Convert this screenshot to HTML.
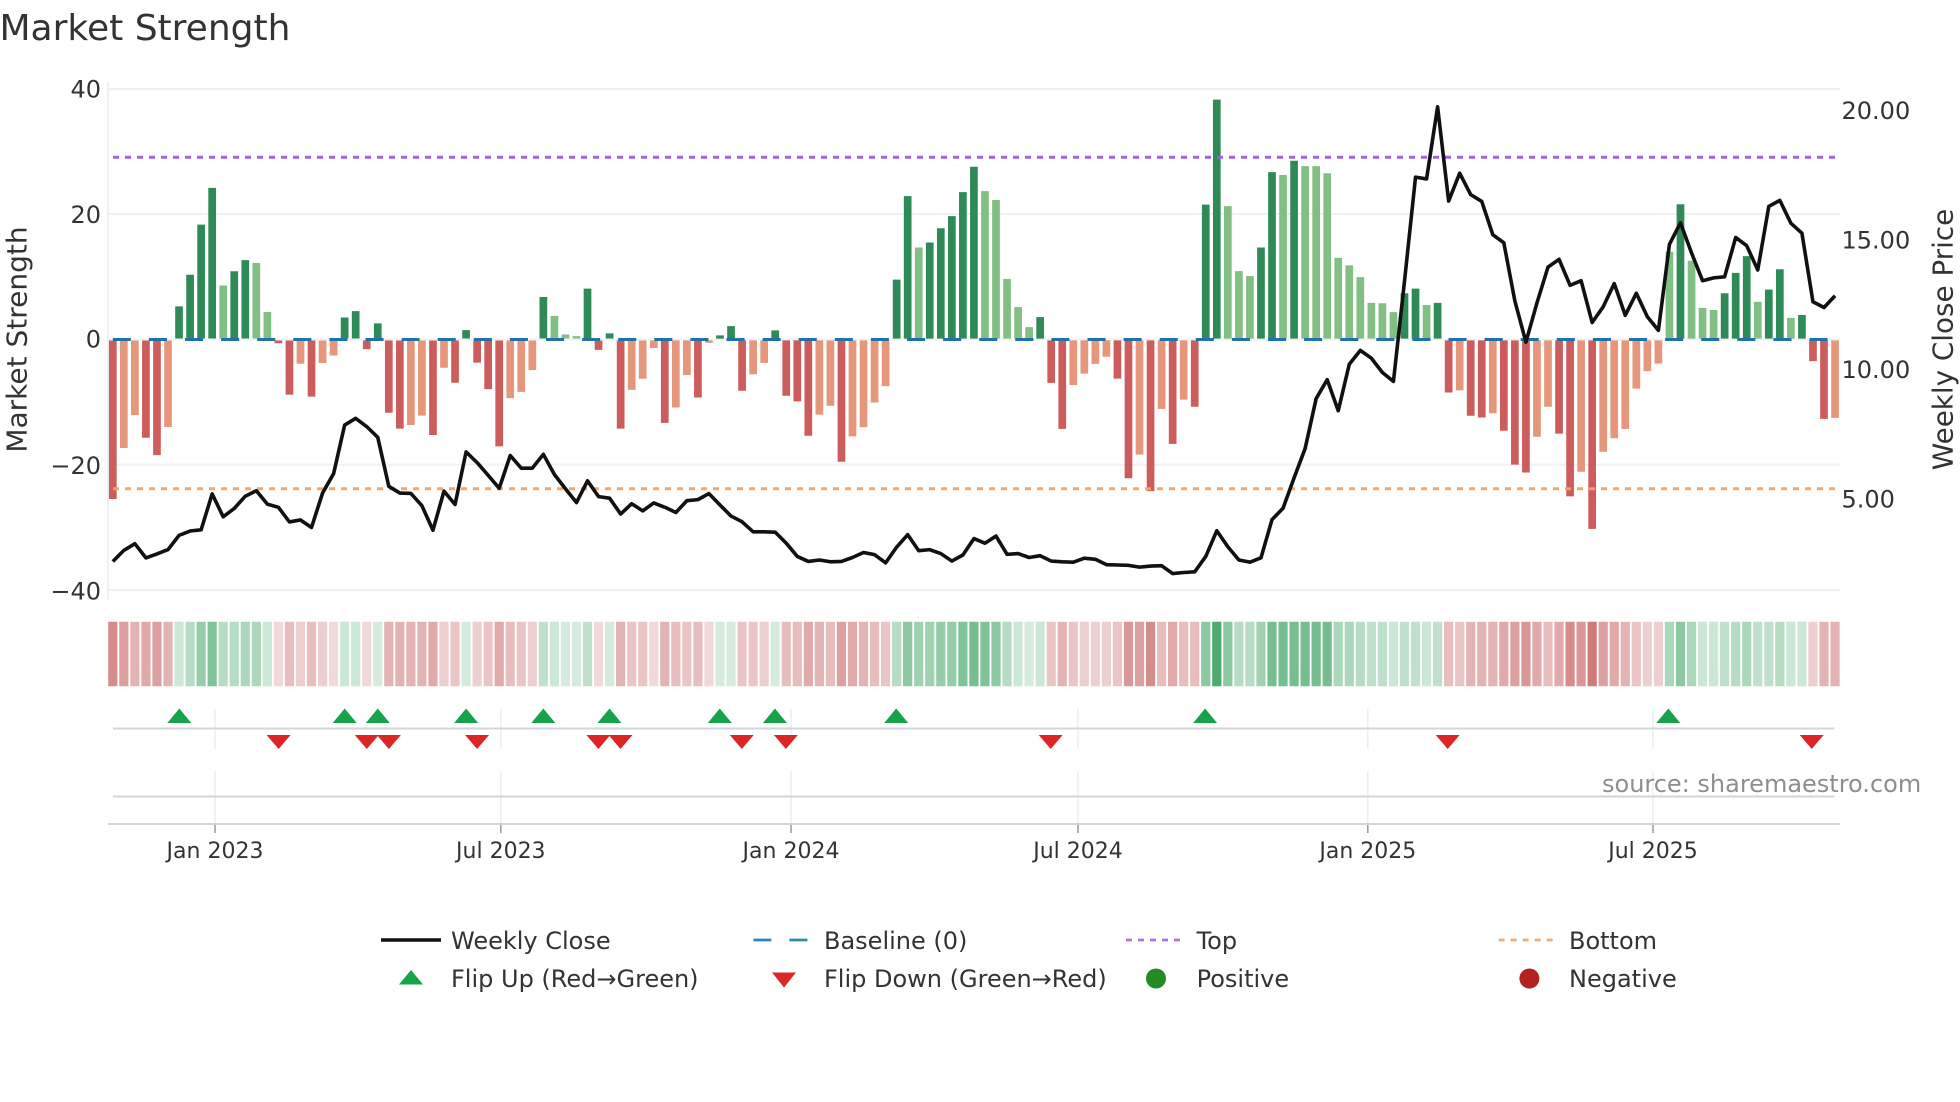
<!DOCTYPE html>
<html>
<head>
<meta charset="utf-8">
<title>Market Strength</title>
<style>
html,body{margin:0;padding:0;background:#fff;width:1960px;height:1102px;overflow:hidden}
svg{display:block}
text{font-family:"DejaVu Sans","Liberation Sans",sans-serif;fill:#333}
.ns{vector-effect:non-scaling-stroke;fill:none}
</style>
</head>
<body>
<svg width="1960" height="1102" viewBox="0 0 1960 1102" xmlns="http://www.w3.org/2000/svg">
<rect width="1960" height="1102" fill="#fff"/>
<text x="-0.5" y="40" font-size="36">Market Strength</text>

<!-- grid -->
<g stroke="#eff1f6" stroke-width="2" fill="none">
<path d="M108 82V600"/>
<path d="M108 89H1840M108 214H1840M108 339.5H1840M108 464.6H1840M108 590H1840"/>
</g>

<!-- bars -->
<g transform="translate(112.8,0) scale(11.04,0.3954)" stroke-width="7.7">
<path class="ns" stroke="#cd5c5c" d="M0 861V1262M3 861V1107M4 861V1151M15 861V868M16 861V998M18 861V1003M23 861V883M25 861V1044M26 861V1084M29 861V1100M31 861V968M33 861V917M34 861V984M35 861V1129M44 861V885M46 861V1084"/>
<path class="ns" stroke="#e6967a" d="M1 861V1133M2 861V1050M5 861V1080M17 861V920M19 861V918M20 861V899M27 861V1075M28 861V1051M30 861V930M36 861V1007M37 861V991M38 861V936M47 861V986M48 861V958M49 861V880"/>
<path class="ns" stroke="#2e8b57" d="M6 856V775M7 856V695M8 856V568M9 856V475M11 856V686M12 856V658M21 856V803M22 856V787M24 856V818M32 856V835M39 856V751M43 856V730M45 856V843"/>
<path class="ns" stroke="#82bf82" d="M10 856V722M13 856V665M14 856V789M40 856V799M41 856V846M42 856V850"/>
</g>
<g transform="translate(112.8,60) scale(11.04,0.35714)" stroke-width="7.7">
<path class="ns" stroke="#cd5c5c" d="M50 785V1016M53 785V945M57 785V926M61 785V940M62 785V956M63 785V1052M66 785V1125M85 785V904M86 785V1033M91 785V892M92 785V1171M94 785V1207M96 785V1075M98 785V971M121 785V931M123 785V996M124 785V1001M126 785V1038M127 785V1133M128 785V1155M131 785V1046M132 785V1222M134 785V1313M154 785V843M155 785V1005"/>
<path class="ns" stroke="#e6967a" d="M51 785V973M52 785V882M54 785V792M58 785V880M59 785V848M64 785V993M65 785V968M67 785V1054M68 785V1028M69 785V959M70 785V913M87 785V910M88 785V878M89 785V851M90 785V831M93 785V1105M95 785V977M97 785V951M122 785V925M125 785V989M129 785V1055M130 785V971M133 785V1153M135 785V1097M136 785V1059M137 785V1033M138 785V920M139 785V871M140 785V850M156 785V1002"/>
<path class="ns" stroke="#2e8b57" d="M55 780V771M56 780V745M60 780V757M71 780V615M72 780V381M74 780V511M75 780V471M76 780V437M77 780V370M78 780V299M84 780V720M99 780V405M100 780V111M104 780V525M105 780V314M107 780V282M117 780V653M118 780V640M120 780V680M142 780V404M146 780V653M147 780V596M148 780V549M150 780V643M151 780V586M153 780V714"/>
<path class="ns" stroke="#82bf82" d="M73 780V525M79 780V367M80 780V392M81 780V613M82 780V692M83 780V748M101 780V409M102 780V591M103 780V605M106 780V322M108 780V297M109 780V297M110 780V317M111 780V554M112 780V575M113 780V608M114 780V680M115 780V681M116 780V706M119 780V686M141 780V537M143 780V562M144 780V694M145 780V700M149 780V677M152 780V722"/>
</g>

<!-- baseline, top, bottom -->
<path d="M112.8 339.5H1835" stroke="#2272a8" stroke-width="3" stroke-dasharray="18.05 18.05" fill="none"/>
<path d="M113 157.2H1835" stroke="#9b5de5" stroke-opacity=".95" stroke-width="3" stroke-dasharray="6 6" fill="none"/>
<path d="M113 488.7H1835" stroke="#f4a261" stroke-opacity=".95" stroke-width="3" stroke-dasharray="6 6" fill="none"/>

<!-- weekly close -->
<g transform="translate(112.8,0) scale(11.04,0.3954)" stroke="#111" stroke-width="3.6" stroke-linejoin="round">
<polyline class="ns" points="0,1420 1,1392 2,1375 3,1411 4,1401 5,1390 6,1354 7,1343 8,1340 9,1249 10,1307 11,1286 12,1255 13,1241 14,1275 15,1283 16,1320 17,1315 18,1334 19,1247 20,1198 21,1075 22,1058 23,1079 24,1106 25,1230 26,1247 27,1248 28,1279 29,1341 30,1242 31,1276 32,1143 33,1170 34,1202 35,1235 36,1152 37,1184 38,1184 39,1149 40,1200 41,1236 42,1271 43,1216 44,1256 45,1260 46,1300 47,1274 48,1292 49,1272 50,1283"/>
</g>
<g transform="translate(112.8,60) scale(11.04,0.35714)" stroke="#111" stroke-width="3.6" stroke-linejoin="round">
<polyline class="ns" points="50,1252 51,1267 52,1234 53,1231 54,1214 55,1246 56,1277 57,1293 58,1321 59,1321 60,1322 61,1353 62,1390 63,1404 64,1400 65,1405 66,1404 67,1393 68,1379 69,1385 70,1408 71,1364 72,1329 73,1374 74,1371 75,1382 76,1403 77,1386 78,1340 79,1353 80,1333 81,1384 82,1382 83,1393 84,1388 85,1403 86,1405 87,1406 88,1395 89,1398 90,1413 91,1414 92,1415 93,1420 94,1417 95,1416 96,1438 97,1435 98,1433 99,1390 100,1318 101,1363 102,1400 103,1406 104,1394 105,1287 106,1255 107,1170 108,1088 109,948 110,895 111,982 112,852 113,813 114,835 115,875 116,900 117,620 118,328 119,333 120,131 121,395 122,317 123,377 124,396 125,489 126,512 127,675 128,790 129,680 130,580 131,558 132,631 133,618 134,735 135,691 136,626 137,715 138,653 139,719 140,757 141,516 142,456 143,540 144,618 145,610 146,607 147,497 148,520 149,588 150,410 151,393 152,457 153,485 154,677 155,693 156,660"/>
</g>

<!-- strip -->
<g transform="translate(112.8,621.7) scale(11.04,64.5)" stroke-width="9.2">
<g stroke="#b22222" opacity=".86">
<path class="ns" stroke-opacity=".2" d="M15 0V1M20 0V1M23 0V1M44 0V1M49 0V1M54 0V1"/>
<path class="ns" stroke-opacity=".25" d="M17 0V1M19 0V1M30 0V1M33 0V1M38 0V1M59 0V1M88 0V1M89 0V1M90 0V1M139 0V1M140 0V1M154 0V1"/>
<path class="ns" stroke-opacity=".3" d="M31 0V1M34 0V1M37 0V1M47 0V1M48 0V1M52 0V1M57 0V1M58 0V1M70 0V1M85 0V1M87 0V1M91 0V1M122 0V1M138 0V1"/>
<path class="ns" stroke-opacity=".35" d="M16 0V1M18 0V1M36 0V1M51 0V1M53 0V1M61 0V1M62 0V1M65 0V1M69 0V1M95 0V1M97 0V1M98 0V1M121 0V1M130 0V1"/>
<path class="ns" stroke-opacity=".4" d="M2 0V1M5 0V1M25 0V1M26 0V1M27 0V1M28 0V1M46 0V1M50 0V1M64 0V1M68 0V1M86 0V1M123 0V1M124 0V1M125 0V1M137 0V1M155 0V1M156 0V1"/>
<path class="ns" stroke-opacity=".45" d="M3 0V1M29 0V1M35 0V1M63 0V1M67 0V1M96 0V1M126 0V1M129 0V1M131 0V1M136 0V1"/>
<path class="ns" stroke-opacity=".5" d="M1 0V1M4 0V1M66 0V1M93 0V1M127 0V1M135 0V1"/>
<path class="ns" stroke-opacity=".55" d="M92 0V1M128 0V1M133 0V1"/>
<path class="ns" stroke-opacity=".6" d="M0 0V1M94 0V1M132 0V1"/>
<path class="ns" stroke-opacity=".7" d="M134 0V1"/>
</g>
<g stroke="#22964a" opacity=".95">
<path class="ns" stroke-opacity=".2" d="M24 0V1M32 0V1M41 0V1M42 0V1M45 0V1M55 0V1M56 0V1M60 0V1M83 0V1"/>
<path class="ns" stroke-opacity=".25" d="M6 0V1M14 0V1M21 0V1M22 0V1M40 0V1M82 0V1M84 0V1M116 0V1M119 0V1M144 0V1M145 0V1M152 0V1M153 0V1"/>
<path class="ns" stroke-opacity=".3" d="M39 0V1M43 0V1M114 0V1M115 0V1M117 0V1M118 0V1M120 0V1M146 0V1M149 0V1M150 0V1"/>
<path class="ns" stroke-opacity=".35" d="M7 0V1M10 0V1M11 0V1M71 0V1M81 0V1M102 0V1M103 0V1M113 0V1M147 0V1M151 0V1"/>
<path class="ns" stroke-opacity=".4" d="M12 0V1M13 0V1M111 0V1M112 0V1M141 0V1M143 0V1M148 0V1"/>
<path class="ns" stroke-opacity=".45" d="M73 0V1M74 0V1M104 0V1"/>
<path class="ns" stroke-opacity=".5" d="M8 0V1M75 0V1M76 0V1"/>
<path class="ns" stroke-opacity=".55" d="M72 0V1M80 0V1M99 0V1M101 0V1M142 0V1"/>
<path class="ns" stroke-opacity=".6" d="M9 0V1M77 0V1M79 0V1"/>
<path class="ns" stroke-opacity=".65" d="M78 0V1M105 0V1M106 0V1M107 0V1M108 0V1M109 0V1M110 0V1"/>
<path class="ns" stroke-opacity=".85" d="M100 0V1"/>
</g>
</g>

<!-- lower panel grid -->
<g stroke="#eceef4" stroke-width="1.5" fill="none">
<path d="M215 709V749M500.8 709V749M791 709V749M1078 709V749M1367.8 709V749M1653 709V749"/>
<path d="M215 771V824M500.8 771V824M791 771V824M1078 771V824M1367.8 771V824M1653 771V824"/>
</g>
<path d="M113 728.5H1834.5M113 796.5H1834.5" stroke="#d3d5da" stroke-width="2" fill="none"/>
<path d="M108 824H1840" stroke="#d3d5da" stroke-width="2" fill="none"/>
<path d="M215 825V833M500.8 825V833M791 825V833M1078 825V833M1367.8 825V833M1653 825V833" stroke="#999" stroke-width="1.5" fill="none"/>

<!-- flip markers -->
<g transform="translate(0.3,0)">
<path fill="#16a34a" d="M167 723l12-14.5 12 14.5zM332.4 723l12-14.5 12 14.5zM365.5 723l12-14.5 12 14.5zM453.8 723l12-14.5 12 14.5zM531 723l12-14.5 12 14.5zM597.2 723l12-14.5 12 14.5zM707.5 723l12-14.5 12 14.5zM762.6 723l12-14.5 12 14.5zM883.9 723l12-14.5 12 14.5zM1192.8 723l12-14.5 12 14.5zM1656 723l12-14.5 12 14.5z"/>
<path fill="#dc2626" d="M266.3 735h24l-12 14zM354.5 735h24l-12 14zM376.6 735h24l-12 14zM464.8 735h24l-12 14zM586.1 735h24l-12 14zM608.2 735h24l-12 14zM729.5 735h24l-12 14zM773.6 735h24l-12 14zM1038.4 735h24l-12 14zM1435.4 735h24l-12 14zM1799.4 735h24l-12 14z"/>
</g>

<!-- axis labels -->
<g font-size="24" text-anchor="end">
<text x="101" y="97.5">40</text>
<text x="101" y="223">20</text>
<text x="101" y="347.5">0</text>
<text x="101" y="474">−20</text>
<text x="101" y="599.5">−40</text>
</g>
<g font-size="24">
<text x="1841.5" y="118.8">20.00</text>
<text x="1841.5" y="248.5">15.00</text>
<text x="1841.5" y="378">10.00</text>
<text x="1841.5" y="507.5">5.00</text>
</g>
<text transform="translate(26.5,339.5) rotate(-90)" font-size="28" text-anchor="middle">Market Strength</text>
<text transform="translate(1952.5,339.5) rotate(-90)" font-size="27.8" text-anchor="middle">Weekly Close Price</text>
<g font-size="22" text-anchor="middle">
<text x="215" y="858">Jan 2023</text>
<text x="500.8" y="858">Jul 2023</text>
<text x="791" y="858">Jan 2024</text>
<text x="1078" y="858">Jul 2024</text>
<text x="1367.8" y="858">Jan 2025</text>
<text x="1653" y="858">Jul 2025</text>
</g>
<text x="1602" y="792" font-size="24" style="fill:#8e8e8e">source: sharemaestro.com</text>

<!-- legend -->
<path d="M381 940H441" stroke="#111" stroke-width="3.4" fill="none"/>
<path d="M753.4 940H808" stroke="#2f86bd" stroke-width="2.8" stroke-dasharray="18 18" fill="none"/>
<path d="M1126 940H1181" stroke="#9b5de5" stroke-opacity=".85" stroke-width="2.8" stroke-dasharray="6 6" fill="none"/>
<path d="M1498.6 940H1554" stroke="#f4a261" stroke-opacity=".9" stroke-width="2.8" stroke-dasharray="6 6" fill="none"/>
<path d="M399 984.5l12-14.5 12 14.5z" fill="#16a34a"/>
<path d="M772 972.5h24l-12 15z" fill="#dc2626"/>
<circle cx="1156" cy="978.5" r="10" fill="#228b22"/>
<circle cx="1529.4" cy="978.5" r="10" fill="#b22222"/>
<g font-size="24">
<text x="451" y="949">Weekly Close</text>
<text x="824" y="949">Baseline (0)</text>
<text x="1196.6" y="949">Top</text>
<text x="1569" y="949">Bottom</text>
<text x="451" y="987">Flip Up (Red→Green)</text>
<text x="824" y="987">Flip Down (Green→Red)</text>
<text x="1196.6" y="987">Positive</text>
<text x="1569" y="987">Negative</text>
</g>
</svg>
</body>
</html>
